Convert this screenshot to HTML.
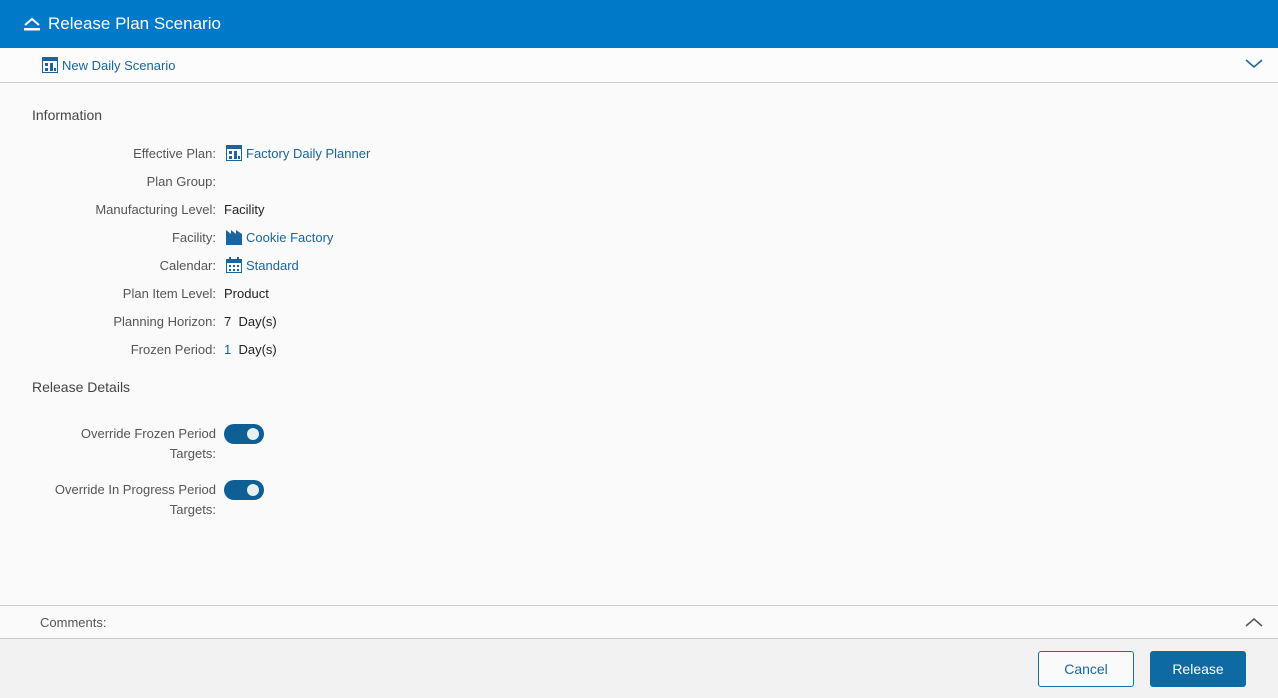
<!DOCTYPE html>
<html><head><meta charset="utf-8"><style>
*{margin:0;padding:0;box-sizing:border-box}
body{width:1278px;height:698px;overflow:hidden;background:#fafafa;font-family:"Liberation Sans",sans-serif;font-size:13px;color:#222;position:relative}
.hdr{position:absolute;left:0;top:0;width:1278px;height:48px;background:#0079c8;color:#fff;font-size:17px}
.hdr span{position:absolute;left:48px;top:14px}
.sub{position:absolute;left:0;top:48px;width:1278px;height:35px;background:#fcfcfc;border-bottom:1px solid #cfcfcf}
.link{color:#1a64a0}
.sec{position:absolute;left:32px;font-size:14px;color:#444}
.lab{position:absolute;right:1062px;color:#555;text-align:right;white-space:nowrap}
.val{position:absolute;left:224px;white-space:nowrap}
.tg{position:absolute;left:224px;width:40px;height:20px;border-radius:10px;background:#0d5f96}
.tg:after{content:"";position:absolute;right:5px;top:4px;width:12px;height:12px;border-radius:6px;background:#e6f0f2}
.com{position:absolute;left:0;top:605px;width:1278px;height:34px;border-top:1px solid #d0d0d0;border-bottom:1px solid #c8c8c8;background:#fafafa}
.ftr{position:absolute;left:0;top:639px;width:1278px;height:59px;background:#f2f2f2}
.btn{position:absolute;top:12px;width:96px;height:36px;border-radius:3px;font-size:14px;text-align:center;line-height:34px}
</style></head><body>
<div class="hdr"><svg style="position:absolute;left:23px;top:16px" width="18" height="16"><path d="M2 9 L9 3 L16 9" stroke="#fff" stroke-width="2" fill="none"/><rect x="1" y="12" width="16" height="2.5" fill="#fff"/></svg><span>Release Plan Scenario</span></div>
<div class="sub">
<svg style="position:absolute;left:42px;top:9px" width="16" height="16"><rect x="0.5" y="0.5" width="15" height="15" fill="none" stroke="#1a64a0"/><rect x="0" y="0" width="16" height="4" fill="#1a64a0"/><rect x="3" y="6" width="3" height="3" fill="#1a64a0"/><rect x="8" y="6" width="3" height="8" fill="#1a64a0"/><rect x="3" y="11" width="3" height="3" fill="#1a64a0"/><rect x="12" y="11" width="2" height="3" fill="#1a64a0"/></svg>
<span class="link" style="position:absolute;left:62px;top:10px">New Daily Scenario</span>
<svg style="position:absolute;left:1245px;top:11px" width="18" height="10"><path d="M1 1 L9 8 L17 1" stroke="#1a64a0" stroke-width="1.5" fill="none"/></svg>
</div>
<div class="sec" style="top:107px">Information</div>
<div class="lab" style="top:146px">Effective Plan:</div>
<svg style="position:absolute;left:226px;top:145px" width="16" height="16"><rect x="0.5" y="0.5" width="15" height="15" fill="none" stroke="#1a64a0"/><rect x="0" y="0" width="16" height="4" fill="#1a64a0"/><rect x="3" y="6" width="3" height="3" fill="#1a64a0"/><rect x="8" y="6" width="3" height="8" fill="#1a64a0"/><rect x="3" y="11" width="3" height="3" fill="#1a64a0"/><rect x="12" y="11" width="2" height="3" fill="#1a64a0"/></svg>
<div class="val link" style="left:246px;top:146px">Factory Daily Planner</div>
<div class="lab" style="top:174px">Plan Group:</div>
<div class="lab" style="top:202px">Manufacturing Level:</div><div class="val" style="top:202px">Facility</div>
<div class="lab" style="top:230px">Facility:</div>
<svg style="position:absolute;left:226px;top:229px" width="16" height="16"><path d="M0 16 V1 L5 5 V1 L10 5 V1 L16 5 V16 Z" fill="#1a64a0"/></svg>
<div class="val link" style="left:246px;top:230px">Cookie Factory</div>
<div class="lab" style="top:258px">Calendar:</div>
<svg style="position:absolute;left:226px;top:257px" width="16" height="16"><rect x="0.5" y="2.5" width="15" height="13" fill="none" stroke="#1a64a0"/><rect x="0" y="2" width="16" height="4" fill="#1a64a0"/><rect x="3" y="0" width="2" height="3" fill="#1a64a0"/><rect x="11" y="0" width="2" height="3" fill="#1a64a0"/><g fill="#1a64a0"><rect x="3" y="8" width="2" height="2"/><rect x="7" y="8" width="2" height="2"/><rect x="11" y="8" width="2" height="2"/><rect x="3" y="12" width="2" height="2"/><rect x="7" y="12" width="2" height="2"/><rect x="11" y="12" width="2" height="2"/></g></svg>
<div class="val link" style="left:246px;top:258px">Standard</div>
<div class="lab" style="top:286px">Plan Item Level:</div><div class="val" style="top:286px">Product</div>
<div class="lab" style="top:314px">Planning Horizon:</div><div class="val" style="top:314px">7&nbsp; Day(s)</div>
<div class="lab" style="top:342px">Frozen Period:</div><div class="val" style="top:342px"><span class="link">1</span>&nbsp; Day(s)</div>
<div class="sec" style="top:379px">Release Details</div>
<div class="lab" style="top:424px;line-height:20px">Override Frozen Period<br>Targets:</div>
<div class="tg" style="top:424px"></div>
<div class="lab" style="top:480px;line-height:20px">Override In Progress Period<br>Targets:</div>
<div class="tg" style="top:480px"></div>
<div class="com"><span style="position:absolute;left:40px;top:9px;color:#555">Comments:</span>
<svg style="position:absolute;left:1245px;top:11px" width="18" height="10"><path d="M1 9 L9 2 L17 9" stroke="#555" stroke-width="1.5" fill="none"/></svg></div>
<div class="ftr">
<div class="btn" style="left:1038px;border:1px solid #1a6ea8;color:#1a64a0;background:#fafafa">Cancel</div>
<div class="btn" style="left:1150px;background:#0d6aa3;color:#fff;border:1px solid #0d6aa3">Release</div>
</div>
</body></html>
